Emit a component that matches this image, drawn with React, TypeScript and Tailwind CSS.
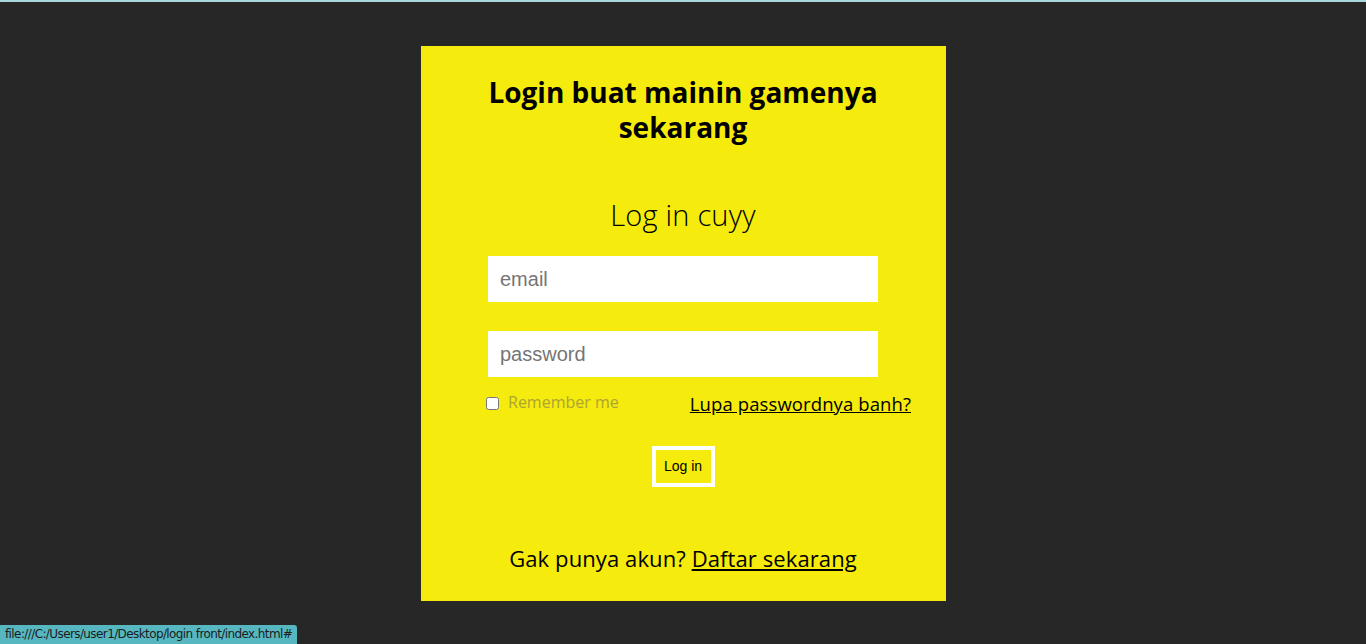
export default function App() {
  return (
    <div className="relative min-h-[644px] h-[644px] bg-[#272727] border-t-2 border-[#a9d9dc] overflow-hidden">
      <div className="mx-auto mt-[44px] w-[525px] h-[555px] bg-[#f5eb0c] flex flex-col items-center font-['Open_Sans',sans-serif]">
        <h1 className="mt-[29px] w-[440px] text-center text-[28px] leading-[35px] font-bold text-black">
          Login buat mainin gamenya sekarang
        </h1>
        <h2 className="mt-[52px] text-[29px] leading-[36px] font-light text-black tracking-[0.2px]">Log in cuyy</h2>
        <input
          className="mt-[23px] w-[390px] h-[46px] bg-white px-3 text-[20px] font-['Liberation_Sans',sans-serif] placeholder:text-[#757575] outline-none"
          placeholder="email"
        />
        <input
          type="password"
          className="mt-[29px] w-[390px] h-[46px] bg-white px-3 text-[20px] font-['Liberation_Sans',sans-serif] placeholder:text-[#757575] outline-none"
          placeholder="password"
        />
        <div className="mt-[13px] ml-[31px] w-[425px] flex items-center justify-between">
          <label className="flex items-center gap-[9px] text-[16px] text-[#aca437]">
            <input type="checkbox" className="w-[13px] h-[13px]" />
            <span className="-mt-[3px]">Remember me</span>
          </label>
          <a href="#" className="text-[18.5px] text-black underline tracking-[0.1px]">Lupa passwordnya banh?</a>
        </div>
        <button className="mt-[28px] w-[63px] h-[41px] border-4 border-white text-[14px] text-black font-['Liberation_Sans',sans-serif]">
          Log in
        </button>
        <p className="mt-[55px] text-[22px] text-black tracking-[0.1px]">
          Gak punya akun? <a href="#" className="underline">Daftar sekarang</a>
        </p>
      </div>
      <div className="absolute left-0 bottom-0 h-[19px] px-[5px] bg-[#56b7c1] rounded-tr-[3px] text-[12px] leading-[19px] text-[#1c1c1c] font-['DejaVu_Sans',sans-serif] tracking-[-0.6px]">
        file:///C:/Users/user1/Desktop/login front/index.html#
      </div>
    </div>
  );
}
